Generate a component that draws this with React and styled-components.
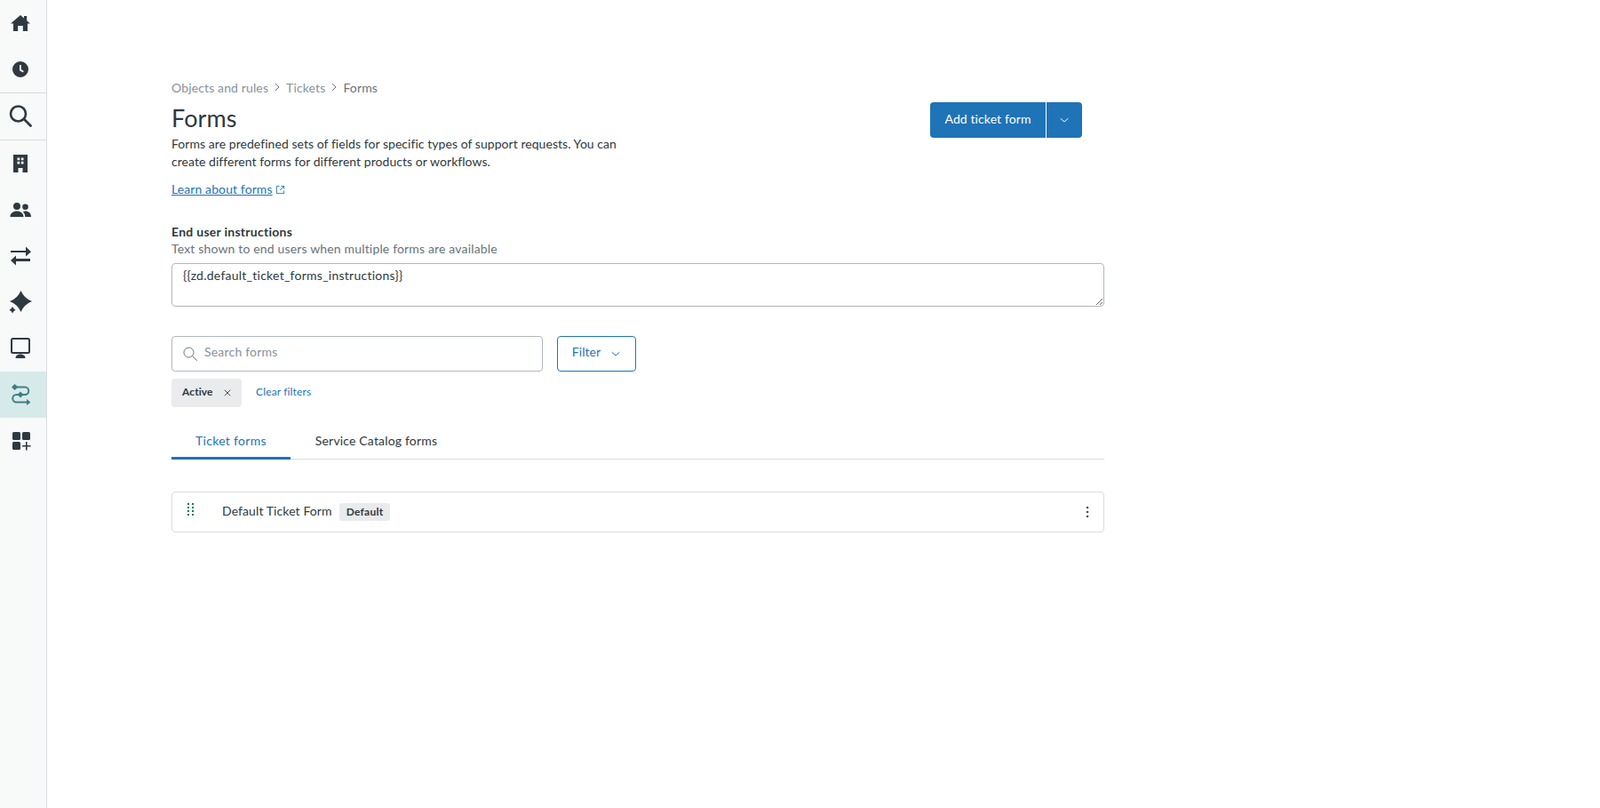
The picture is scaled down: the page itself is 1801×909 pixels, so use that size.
import styled, { createGlobalStyle } from "styled-components";

const GlobalStyle = createGlobalStyle`
	html, body {
		margin: 0;
		height: 100%;
		background: #fff;
		font-family: "Lato", "Liberation Sans", sans-serif;
		font-size: 14px;
		letter-spacing: 0.1px;
		color: #2f3941;
	}
	#root {
		height: 100%;
	}
`;

const Shell = styled.div`
	display: flex;
	min-height: 909px;
`;

const Rail = styled.nav`
	width: 52px;
	flex: none;
	background: #f8f9f9;
	border-right: 1px solid #d8dcde;
`;

const RailItem = styled.div`
	height: 52px;
	display: flex;
	align-items: center;
	justify-content: center;
	padding-right: 6px;
	box-sizing: border-box;
	color: ${(props) => (props.$active ? "#3f7e81" : "#2f3941")};
	background: ${(props) => (props.$active ? "#d7eaea" : "transparent")};
`;

const RailGroup = styled.div`
	border-top: 1px solid #d8dcde;
	border-bottom: 1px solid #d8dcde;
`;

const Main = styled.main`
	flex: 1;
	padding: 88px 0 0 140px;
`;

const Content = styled.div`
	width: 1050px;
`;

const Header = styled.div`
	display: flex;
	justify-content: space-between;
	align-items: flex-start;
	padding-right: 25px;
`;

const Breadcrumb = styled.div`
	display: flex;
	align-items: center;
	gap: 6px;
	height: 20px;
	color: #87929d;
	letter-spacing: 0.13px;
	span:last-child {
		color: #68737d;
	}
`;

const Title = styled.h1`
	margin: 7px 0 0;
	font-size: 27px;
	line-height: 36px;
	font-weight: 400;
	color: #2f3941;
`;

const Description = styled.p`
	margin: 1px 0 0;
	width: 520px;
	line-height: 20px;
	letter-spacing: 0.05px;
`;

const DocLink = styled.a`
	display: inline-flex;
	align-items: center;
	gap: 3px;
	margin-top: 11px;
	line-height: 20px;
	color: #1f73b7;
	span {
		text-decoration: underline;
	}
`;

const SplitButton = styled.div`
	display: flex;
	margin-top: 27px;
	height: 40px;
	color: #fff;
	background: #1f73b7;
	border-radius: 4px;
	overflow: hidden;
`;

const ButtonPart = styled.div`
	display: flex;
	align-items: center;
	justify-content: center;
	box-sizing: border-box;
	padding-bottom: ${(props) => props.$lift || 0}px;
	width: ${(props) => props.$width}px;
	& + & {
		border-left: 1px solid #fff;
	}
`;

const FieldBlock = styled.div`
	margin-top: 28px;
`;

const FieldLabel = styled.div`
	font-weight: 700;
	line-height: 20px;
	letter-spacing: 0.27px;
`;

const FieldHint = styled.div`
	margin-top: -1px;
	color: #68737d;
	line-height: 20px;
	letter-spacing: 0.16px;
`;

const Instructions = styled.textarea`
	display: block;
	box-sizing: border-box;
	width: 100%;
	height: 49px;
	margin-top: 6px;
	padding: 3px 12px;
	border: 1px solid #b0b8be;
	border-radius: 4px;
	font: inherit;
	line-height: 20px;
	letter-spacing: 0.25px;
	color: #2f3941;
	outline: none;
`;

const FilterRow = styled.div`
	display: flex;
	gap: 16px;
	margin-top: 33px;
`;

const SearchBox = styled.label`
	display: flex;
	align-items: center;
	gap: 8px;
	box-sizing: border-box;
	width: 418px;
	height: 40px;
	padding: 0 12px;
	border: 1px solid #b0b8be;
	border-radius: 4px;
	color: #68737d;
`;

const SearchInput = styled.input`
	flex: 1;
	border: 0;
	padding: 0 0 6px;
	font: inherit;
	letter-spacing: 0.2px;
	outline: none;
	&::placeholder {
		color: #87929d;
		opacity: 1;
	}
`;

const FilterButton = styled.div`
	display: flex;
	align-items: center;
	justify-content: center;
	gap: 11px;
	box-sizing: border-box;
	width: 89px;
	height: 40px;
	border: 1px solid #1f73b7;
	border-radius: 4px;
	color: #1f73b7;
`;

const FilterText = styled.span`
	padding-bottom: 6px;
`;

const ActiveFilters = styled.div`
	display: flex;
	align-items: center;
	gap: 16px;
	margin-top: 8px;
`;

const Tag = styled.div`
	display: flex;
	align-items: center;
	justify-content: space-between;
	box-sizing: border-box;
	width: 79px;
	height: 32px;
	padding: 0 11px 0 12px;
	background: #e9ebed;
	border-radius: 4px;
	font-size: 12px;
	font-weight: 700;
`;

const TagText = styled.span`
	padding-bottom: 3px;
`;

const ClearLink = styled.a`
	padding-bottom: 3px;
	font-size: 12px;
	letter-spacing: 0.15px;
	color: #1f73b7;
`;

const Tabs = styled.div`
	display: flex;
	margin-top: 19px;
	border-bottom: 1px solid #d8dcde;
`;

const Tab = styled.div`
	box-sizing: border-box;
	height: 40px;
	padding: 0 27px;
	line-height: 38px;
	letter-spacing: 0.3px;
	color: ${(props) => (props.$active ? "#1f73b7" : "#2f3941")};
	border-bottom: 3px solid ${(props) => (props.$active ? "#1f73b7" : "transparent")};
	margin-bottom: -1px;
	& + & {
		padding-left: 28px;
		letter-spacing: 0.17px;
	}
`;

const FormCard = styled.div`
	display: flex;
	align-items: center;
	box-sizing: border-box;
	height: 46px;
	margin-top: 36px;
	padding: 0 16px 0 17px;
	border: 1px solid #d8dcde;
	border-radius: 4px;
`;

const DragHandle = styled.svg`
	flex: none;
	align-self: flex-start;
	margin-top: 11px;
	color: #038153;
`;

const FormName = styled.span`
	margin-left: 31px;
	padding-bottom: 4px;
	letter-spacing: 0.1px;
`;

const DefaultBadge = styled.span`
	margin-left: 8px;
	height: 20px;
	padding: 0 8px;
	line-height: 19px;
	font-size: 12px;
	font-weight: 700;
	letter-spacing: 0.25px;
	background: #e9ebed;
	border-radius: 3px;
`;

const MenuIcon = styled.svg`
	margin-left: auto;
	color: #49545c;
`;

const Icon = ({ size = 26, children }) => (
	<svg width={size} height={size} viewBox="0 0 26 26" fill="currentColor">
		{children}
	</svg>
);

const railTop = [
	<path key="h" d="M2 13.500 13 4l4 3.400V5h3.200v5.200L24 13.500h-3V22h-5.200v-6h-5.600v6H5v-8.500z" />,
	<path
		key="c"
		fillRule="evenodd"
		d="M13 4a9 9 0 1 1 0 18 9 9 0 0 1 0-18zm-1 4v6.200l3.800 2.200 1-1.500-3-1.800V8z"
	/>,
];

const railRest = [
	<path
		key="b"
		fillRule="evenodd"
		d="M5 3h16v20h-5.500v-5h-5v5H5zm4.500 3.500v2.700h2.700V6.500zm4.300 0v2.700h2.700V6.500zm-4.300 4.300v2.700h2.700v-2.700zm4.300 0v2.700h2.700v-2.700z"
	/>,
	<path
		key="p"
		d="M9 5a4 4 0 1 1 0 8 4 4 0 0 1 0-8zm9.500 1.500a3.300 3.300 0 1 1 0 6.600 3.300 3.300 0 0 1 0-6.600zM1.500 21c0-4 3.200-6.500 7.500-6.500s7.500 2.500 7.500 6.500zm16.800 0c0-2.400-.9-4.400-2.500-5.800.8-.4 1.800-.6 2.800-.6 3.600 0 6.400 2.200 6.400 6.400z"
	/>,
	<path
		key="a"
		d="M2 7.500h17V3l6 5.800-6 5.200V9.500H2zM24 16.500H8V13l-6 5.500L8 24v-4.500h16z"
		transform="translate(0 -.5)"
	/>,
	<path
		key="s"
		d="M13.500 0Q17 8.500 26 12 17 15.500 13.500 24 10 15.500 1 12 10 8.500 13.500 0zM4 18q1 2.500 3.500 3.700Q5 23 4 25.500 3 23 .5 21.700 3 20.500 4 18z"
	/>,
	<g key="m">
		<rect x="3" y="2" width="20" height="16" rx="1.500" fill="none" stroke="currentColor" strokeWidth="2" />
		<path d="M7.500 24c0-3 2.500-4.500 5.500-4.500s5.500 1.500 5.500 4.500z" />
	</g>,
];

const FlowIcon = () => (
	<Icon>
		<path
			d="M8 4.500h10a4 4 0 0 1 0 8.500H8.500a4 4 0 0 0 0 8.500H21"
			fill="none"
			stroke="currentColor"
			strokeWidth="2"
		/>
		<path d="M6.500 1 10.500 4.500 6.500 8 3 4.500zM13 9.500 16.500 13 13 16.500 9.500 13zM20 18l4.500 3.500L20 25z" />
	</Icon>
);

const AddAppIcon = () => (
	<Icon>
		<rect x="4" y="3" width="9" height="9" rx="1.500" />
		<rect x="15" y="3" width="9" height="9" rx="1.500" />
		<rect x="4" y="14" width="9" height="9" rx="1.500" />
		<path d="M19 14h1.600v4H24.500v1.600h-3.900v4H19v-4h-3.900V18H19z" />
	</Icon>
);

const Chevron = ({ size = 12 }) => (
	<svg width={size} height={size} viewBox="0 0 12 12" fill="none" stroke="currentColor">
		<path d="M2 4.500 6 8l4-3.500" strokeLinecap="round" />
	</svg>
);

const CrumbArrow = () => (
	<svg width="8" height="10" viewBox="0 0 8 10" fill="none" stroke="#68737d">
		<path d="M2 1l4 4-4 4" />
	</svg>
);

export default function App() {
	return (
		<Shell>
			<GlobalStyle />
			<Rail>
				{railTop.map((icon) => (
					<RailItem key={icon.key}>
						<Icon>{icon}</Icon>
					</RailItem>
				))}
				<RailGroup>
					<RailItem>
						<Icon>
							<circle cx="10.500" cy="10" r="8.500" fill="none" stroke="currentColor" strokeWidth="2.600" />
							<path d="M17 16 24.500 23.500" stroke="currentColor" strokeWidth="2.800" strokeLinecap="round" />
						</Icon>
					</RailItem>
				</RailGroup>
				{railRest.map((icon) => (
					<RailItem key={icon.key}>
						<Icon>{icon}</Icon>
					</RailItem>
				))}
				<RailItem $active>
					<FlowIcon />
				</RailItem>
				<RailItem>
					<AddAppIcon />
				</RailItem>
			</Rail>
			<Main>
				<Content>
					<Header>
						<div>
							<Breadcrumb>
								<span>Objects and rules</span>
								<CrumbArrow />
								<span>Tickets</span>
								<CrumbArrow />
								<span>Forms</span>
							</Breadcrumb>
							<Title>Forms</Title>
							<Description>
								Forms are predefined sets of fields for specific types of support requests. You can
								create different forms for different products or workflows.
							</Description>
							<DocLink>
								<span>Learn about forms</span>
								<svg width="11" height="11" viewBox="0 0 12 12" fill="none" stroke="currentColor">
									<path d="M5 1.500H1.500v9h9V7M7 1.500h3.500V5M10.500 1.500 5.500 6.500" />
								</svg>
							</DocLink>
						</div>
						<SplitButton>
							<ButtonPart $width={130} $lift={4}>
								Add ticket form
							</ButtonPart>
							<ButtonPart $width={41}>
								<Chevron />
							</ButtonPart>
						</SplitButton>
					</Header>
					<FieldBlock>
						<FieldLabel>End user instructions</FieldLabel>
						<FieldHint>Text shown to end users when multiple forms are available</FieldHint>
						<Instructions defaultValue="{{zd.default_ticket_forms_instructions}}" />
					</FieldBlock>
					<FilterRow>
						<SearchBox>
							<svg width="16" height="16" viewBox="0 0 16 16" fill="none" stroke="currentColor">
								<circle cx="6.500" cy="6.500" r="5.500" />
								<path d="m10.500 10.500 5 5" strokeLinecap="round" />
							</svg>
							<SearchInput placeholder="Search forms" />
						</SearchBox>
						<FilterButton>
							<FilterText>Filter</FilterText>
							<Chevron />
						</FilterButton>
					</FilterRow>
					<ActiveFilters>
						<Tag>
							<TagText>Active</TagText>
							<svg width="10" height="10" viewBox="0 0 10 10" stroke="#49545c">
								<path d="m2 2 6 6M8 2 2 8" strokeLinecap="round" />
							</svg>
						</Tag>
						<ClearLink>Clear filters</ClearLink>
					</ActiveFilters>
					<Tabs>
						<Tab $active>Ticket forms</Tab>
						<Tab>Service Catalog forms</Tab>
					</Tabs>
					<FormCard>
						<DragHandle width="8" height="16" viewBox="0 0 8 16" fill="currentColor">
							<rect x="0" y="1" width="2" height="2" />
							<rect x="5" y="1" width="2" height="2" />
							<rect x="0" y="5" width="2" height="2" />
							<rect x="5" y="5" width="2" height="2" />
							<rect x="0" y="9" width="2" height="2" />
							<rect x="5" y="9" width="2" height="2" />
							<rect x="0" y="13" width="2" height="2" />
							<rect x="5" y="13" width="2" height="2" />
						</DragHandle>
						<FormName>Default Ticket Form</FormName>
						<DefaultBadge>Default</DefaultBadge>
						<MenuIcon width="4" height="14" viewBox="0 0 4 14" fill="currentColor">
							<circle cx="2" cy="2" r="1.300" />
							<circle cx="2" cy="7" r="1.300" />
							<circle cx="2" cy="12" r="1.300" />
						</MenuIcon>
					</FormCard>
				</Content>
			</Main>
		</Shell>
	);
}
